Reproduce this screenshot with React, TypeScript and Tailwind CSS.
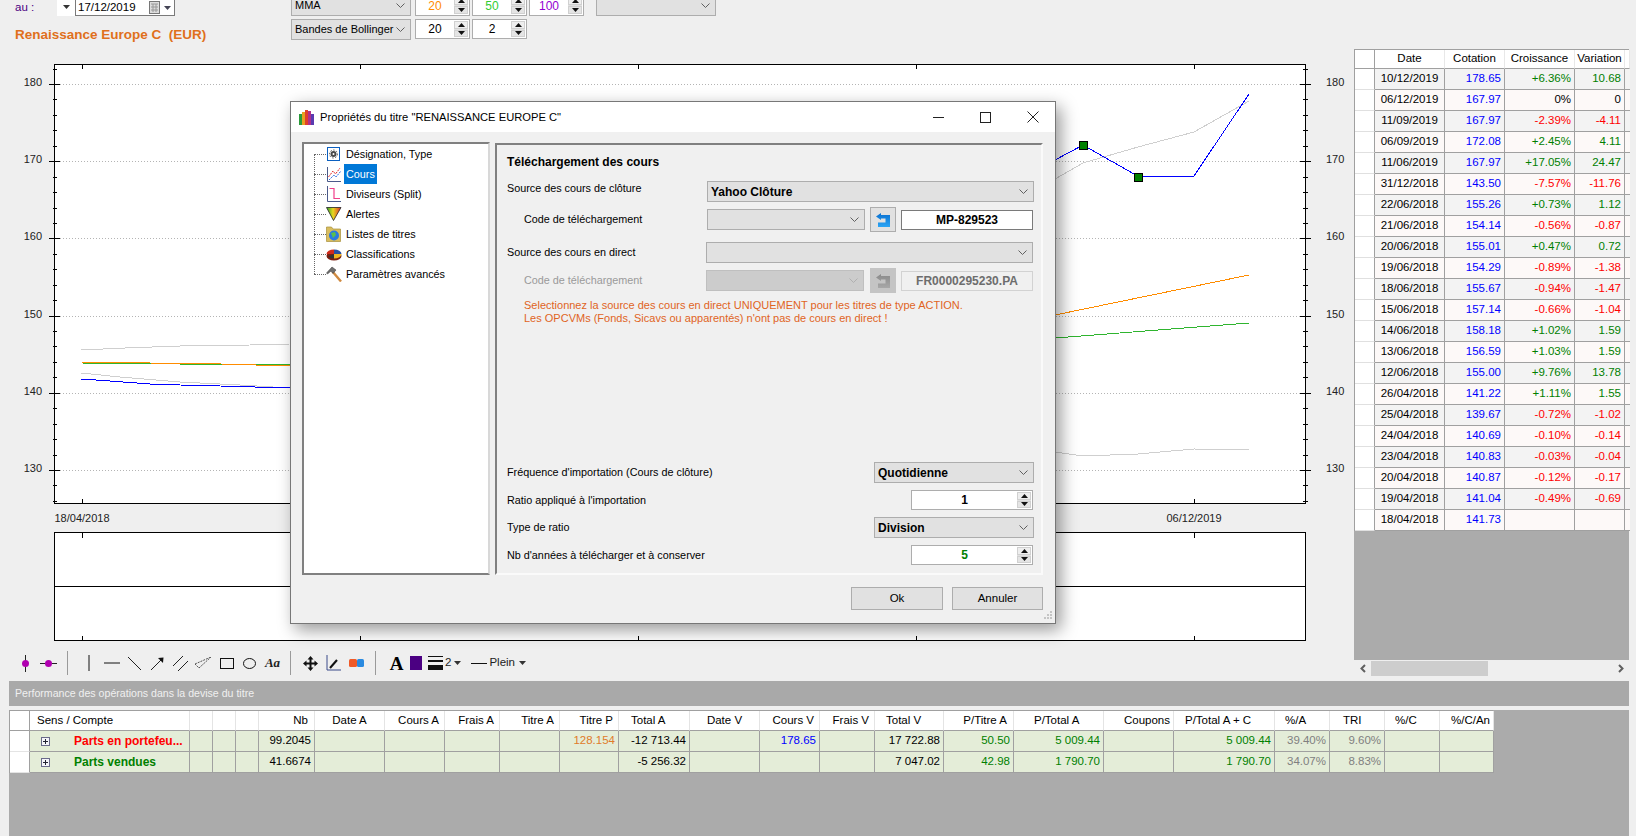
import React from "react";

const Chevron = ({ color = "#606060" }: { color?: string }) => (
  <svg width="9" height="5" viewBox="0 0 9 5" className="shrink-0">
    <path d="M0.5 0.5 L4.5 4.5 L8.5 0.5" fill="none" stroke={color} strokeWidth="1" />
  </svg>
);

const Combo = ({ text, className = "", bold = false, disabled = false }: { text?: string; className?: string; bold?: boolean; disabled?: boolean }) => (
  <div className={`flex items-center justify-between border pl-[3px] pr-[5px] ${disabled ? "bg-[#cccccc] border-[#bfbfbf]" : "bg-[#e1e1e1] border-[#adadad]"} ${bold ? "font-bold text-[12px]" : ""} ${className}`}>
    <span className="whitespace-nowrap">{text}</span>
    <Chevron color={disabled ? "#b0b0b0" : "#606060"} />
  </div>
);

const Stepper = () => (
  <div className="flex flex-col w-[14px] h-[16px] shrink-0 bg-[#e1e1e1] gap-px">
    <div className="flex-1 flex items-center justify-center border border-[#d0d0d0] bg-[#eeeeee]">
      <svg width="7" height="4" viewBox="0 0 7 4"><path d="M3.5 0 L7 4 L0 4 Z" fill="#111" /></svg>
    </div>
    <div className="flex-1 flex items-center justify-center border border-[#d0d0d0] bg-[#e4e4e4]">
      <svg width="7" height="4" viewBox="0 0 7 4"><path d="M0 0 L7 0 L3.5 4 Z" fill="#111" /></svg>
    </div>
  </div>
);

const Spin = ({ value, className = "", text = "" }: { value: string; className?: string; text?: string }) => (
  <div className={`flex items-center bg-white border border-[#adadad] pr-[1px] ${className}`}>
    <div className={`flex-1 text-center ${text}`}>{value}</div>
    <Stepper />
  </div>
);

const Fetch = ({ gray = false }: { gray?: boolean }) => {
  const id = gray ? "fetch-gray" : "fetch-blue";
  return (
    <div className={`w-[26px] h-[25px] flex items-center justify-center border ${gray ? "bg-[#c4c4c4] border-[#c4c4c4]" : "bg-[#e1e1e1] border-[#adadad]"}`}>
      <svg width="15" height="14" viewBox="0 0 15 14">
        <defs>
          <linearGradient id={id} x1="0" y1="0" x2="0" y2="1">
            <stop offset="0" stopColor={gray ? "#8a8a8a" : "#0a6fd0"} />
            <stop offset="1" stopColor={gray ? "#a8a8a8" : "#2aa5f5"} />
          </linearGradient>
        </defs>
        <path d="M0 3.5 L5 0 V2 H14 V14 H2 V9.5 H9.5 V5.5 H5 V7 Z" fill={`url(#${id})`} />
      </svg>
    </div>
  );
};

const Designation = () => (
  <svg width="16" height="16" viewBox="0 0 16 16">
    <rect x="1.5" y="1.5" width="12" height="13" fill="#fff" stroke="#0b5fc0" />
    <circle cx="7.5" cy="8" r="3" fill="#4a4a4a" />
    <circle cx="7.5" cy="8" r="4" fill="none" stroke="#555" strokeDasharray="1.5 1.5" />
    <circle cx="7.5" cy="8" r="1" fill="#fff" />
  </svg>
);
const CoursI = () => (
  <svg width="16" height="16" viewBox="0 0 16 16">
    <path d="M1.5 1 V15.5 H15" fill="none" stroke="#4a5a8a" />
    <path d="M2.5 11 L7 5 L9.5 8 L14 2" fill="none" stroke="#e02a2a" strokeDasharray="2 1" />
    <path d="M3 14 L8 9 L10 11 L15 5" fill="none" stroke="#2a6ae0" strokeDasharray="2 1" />
  </svg>
);
const Split = () => (
  <svg width="16" height="16" viewBox="0 0 16 16">
    <path d="M1.5 0 V15.5 H15" fill="none" stroke="#4a5a8a" />
    <path d="M3.5 2.5 H8 V12.5 H14" fill="none" stroke="#f0408a" strokeWidth="1.2" />
  </svg>
);
const Alert = () => (
  <svg width="16" height="16" viewBox="0 0 16 16">
    <defs>
      <linearGradient id="al" x1="0" y1="0" x2="1" y2="0">
        <stop offset="0" stopColor="#2aa02a" />
        <stop offset="0.45" stopColor="#e8d820" />
        <stop offset="1" stopColor="#e02a2a" />
      </linearGradient>
    </defs>
    <path d="M0.5 1.5 H15 L7.5 14.5 Z" fill="url(#al)" stroke="#222" strokeWidth="0.8" />
  </svg>
);
const Folder = () => (
  <svg width="16" height="16" viewBox="0 0 16 16">
    <path d="M0.5 1 H5.5 L7 3 H14.5 V15.5 H0.5 Z" fill="#d9bd5f" stroke="#a88f3a" strokeWidth="0.7" />
    <circle cx="8" cy="9.5" r="5" fill="#2a7ae0" />
    <path d="M5 7 L9 6 L10 9 L7 12 Z" fill="#5bc04a" />
  </svg>
);
const Pie = () => (
  <svg width="16" height="16" viewBox="0 0 16 16">
    <ellipse cx="8" cy="10" rx="7.5" ry="4.5" fill="#7a1f10" />
    <path d="M8 8 L0.5 8 A7.5 4.5 0 0 1 8 3.5 Z" fill="#d02a1a" />
    <path d="M8 8 L8 3.5 A7.5 4.5 0 0 1 15.5 8 Z" fill="#2a50a0" />
    <path d="M8 8 L15.5 8 A7.5 4.5 0 0 1 8 12.5 Z" fill="#eeb520" />
    <path d="M8 8 L8 12.5 A7.5 4.5 0 0 1 2 10.5 Z" fill="#333" />
  </svg>
);
const Hammer = () => (
  <svg width="16" height="16" viewBox="0 0 16 16">
    <path d="M6.5 5.5 L15 15.5" stroke="#d08a40" strokeWidth="2.4" />
    <path d="M0.5 7 L6 1 L10 4 L7 7.5 L5 5 L1.5 8 Z" fill="#6e6e6e" stroke="#333" strokeWidth="0.5" />
  </svg>
);

const treeItems: { label: string; icon: React.ReactNode; selected?: boolean }[] = [
  { label: "Désignation, Type", icon: <Designation /> },
  { label: "Cours", icon: <CoursI />, selected: true },
  { label: "Diviseurs (Split)", icon: <Split /> },
  { label: "Alertes", icon: <Alert /> },
  { label: "Listes de titres", icon: <Folder /> },
  { label: "Classifications", icon: <Pie /> },
  { label: "Paramètres avancés", icon: <Hammer /> },
];

const Tree = () => (
  <div className="relative w-[188px] bg-white border-t-2 border-l-2 border-[#808080] border-r-2 border-r-[#d8d8d8] border-b-2 border-b-[#808080]">
    <div className="absolute left-[10px] top-[10px] h-[120px] border-l border-dotted border-[#666]" />
    {treeItems.map((t) => (
      <div key={t.label} className="flex items-center h-[20px] pl-[10px]">
        <div className="w-[12px] border-t border-dotted border-[#666]" />
        <div className="w-[16px] h-[16px]">{t.icon}</div>
        <div className={`ml-[2px] h-[20px] leading-[20px] px-[2px] ${t.selected ? "bg-[#0078d7] text-white" : ""}`}>{t.label}</div>
      </div>
    ))}
  </div>
);

const Dialog = () => (
  <div className="absolute left-[290px] top-[101px] w-[766px] h-[523px] flex flex-col bg-[#f0f0f0] border border-[#777777] shadow-[5px_6px_16px_rgba(0,0,0,0.4)] text-[10.8px] text-black">
    <div className="h-[30px] bg-white flex items-center shrink-0 pl-[8px]">
      <svg width="16" height="16" viewBox="0 0 16 16" className="mr-[5px]">
        <rect x="0" y="5" width="3" height="11" fill="#2a9a3a" />
        <rect x="3" y="3" width="3" height="13" fill="#e8a020" />
        <rect x="6" y="1" width="3" height="15" fill="#e0402a" />
        <rect x="9" y="2" width="3" height="14" fill="#b0308a" />
        <rect x="12" y="5" width="3" height="11" fill="#5a3ab0" />
      </svg>
      <span className="text-[11.2px]">Propriétés du titre "RENAISSANCE EUROPE C"</span>
      <div className="ml-auto flex items-center h-full">
        <div className="w-[47px] flex justify-center"><svg width="11" height="1"><rect width="11" height="1" fill="#222" /></svg></div>
        <div className="w-[47px] flex justify-center"><svg width="11" height="11"><rect x="0.5" y="0.5" width="10" height="10" fill="none" stroke="#222" /></svg></div>
        <div className="w-[47px] flex justify-center mr-[-1px]"><svg width="12" height="12"><path d="M0.5 0.5 L11.5 11.5 M11.5 0.5 L0.5 11.5" stroke="#222" /></svg></div>
      </div>
    </div>
    <div className="flex-1 flex pl-[11px] pr-[12px] pt-[10px] gap-[5px] h-[433px] max-h-[443px]">
      <Tree />
      <div className="flex-1 mt-[1px] flex flex-col border-t-2 border-l-2 border-t-[#808080] border-l-[#808080] border-r-2 border-b-2 border-r-[#fafafa] border-b-[#fafafa] pl-[10px] pr-[7px] pb-[8px]">
        <div className="mt-[10px] h-[14px] leading-[14px] font-bold text-[12px]">Téléchargement des cours</div>
        <div className="mt-[12px] flex h-[21px]">
          <div className="w-[200px] leading-[14px]">Source des cours de clôture</div>
          <Combo text="Yahoo Clôture" bold className="flex-1" />
        </div>
        <div className="mt-[5px] flex items-center h-[25px]">
          <div className="w-[200px] pl-[17px]">Code de téléchargement</div>
          <Combo className="w-[158px] h-[21px]" />
          <div className="ml-[5px]"><Fetch /></div>
          <div className="ml-[5px] w-[132px] h-[20px] flex items-center justify-center bg-white border border-[#7a7a7a] font-bold text-[12px]">MP-829523</div>
        </div>
        <div className="mt-[10px] flex items-center h-[21px]">
          <div className="w-[199px]">Source des cours en direct</div>
          <Combo className="w-[327px] h-[21px]" />
        </div>
        <div className="mt-[5px] flex items-center h-[25px]">
          <div className="w-[199px] pl-[17px] text-[#9a9a9a]">Code de téléchargement</div>
          <Combo disabled className="w-[158px] h-[21px]" />
          <div className="ml-[6px]"><Fetch gray /></div>
          <div className="ml-[5px] w-[132px] h-[20px] flex items-center justify-center bg-[#f0f0f0] border border-[#d2d2d2] font-bold text-[12px] text-[#6d6d6d]">FR0000295230.PA</div>
        </div>
        <div className="mt-[6px] pl-[17px] leading-[13px] text-[#e0641e] text-[11px]">
          <div>Selectionnez la source des cours en direct UNIQUEMENT pour les titres de type ACTION.</div>
          <div>Les OPCVMs (Fonds, Sicavs ou apparentés) n'ont pas de cours en direct !</div>
        </div>
        <div className="mt-auto flex items-center justify-between h-[21px]">
          <div>Fréquence d'importation (Cours de clôture)</div>
          <Combo text="Quotidienne" bold className="w-[160px] h-[21px]" />
        </div>
        <div className="mt-[7px] flex items-center justify-between h-[20px]">
          <div>Ratio appliqué à l'importation</div>
          <Spin value="1" text="font-bold text-[12px]" className="w-[122px] h-[20px] mr-[1px]" />
        </div>
        <div className="mt-[7px] flex items-center justify-between h-[21px]">
          <div>Type de ratio</div>
          <Combo text="Division" bold className="w-[160px] h-[21px]" />
        </div>
        <div className="mt-[7px] flex items-center justify-between h-[20px]">
          <div>Nb d'années à télécharger et à conserver</div>
          <Spin value="5" text="font-bold text-[12px] text-[#008000]" className="w-[122px] h-[20px] mr-[1px]" />
        </div>
      </div>
    </div>
    <div className="relative h-[47px] shrink-0 flex justify-end gap-[9px] pt-[12px] pr-[12px]">
      <div className="w-[92px] h-[23px] flex items-center justify-center bg-[#e1e1e1] border border-[#adadad] text-[11.5px]">Ok</div>
      <div className="w-[91px] h-[23px] flex items-center justify-center bg-[#e1e1e1] border border-[#adadad] text-[11.5px]">Annuler</div>
      <svg width="10" height="10" viewBox="0 0 10 10" className="absolute right-[2px] bottom-[2px]">
        <g fill="#c4c4c4">
          <rect x="7" y="1" width="2" height="2" /><rect x="4" y="4" width="2" height="2" /><rect x="7" y="4" width="2" height="2" />
          <rect x="1" y="7" width="2" height="2" /><rect x="4" y="7" width="2" height="2" /><rect x="7" y="7" width="2" height="2" />
        </g>
      </svg>
    </div>
  </div>
);

const yOf = (v: number) => 84 + (180 - v) * 7.72;
const xTicks = [82, 360, 638, 916, 1194];
const yMajor = [130, 140, 150, 160, 170, 180];
const yMinor = Array.from({ length: 29 }, (_, i) => 126 + i * 2).filter((v) => v % 10 !== 0);

const Chart = () => (
  <svg width="1354" height="601" viewBox="0 49 1354 601" className="block">
    <g shapeRendering="crispEdges">
      <rect x="54.5" y="64.5" width="1251" height="439" fill="#fff" />
      {yMajor.map((v) => (
        <line key={v} x1="54" x2="1305" y1={Math.round(yOf(v)) + 0.5} y2={Math.round(yOf(v)) + 0.5} stroke="#b4b4b4" strokeDasharray="1 2" />
      ))}
      <polyline fill="none" stroke="#cfcfcf" points="81,350 125,348 180,346 250,345 290,344 1055,179 1083,163 1138,147 1194,132 1249,101" />
      <polyline fill="none" stroke="#cfcfcf" points="81,373 120,377 180,382 240,385 290,388 600,460 1055,452 1083,456 1138,454 1194,449 1249,450" />
      <polyline fill="none" stroke="#2fb52f" points="81,363 277,365 1055,338 1249,323" />
      <polyline fill="none" stroke="#ff8c00" points="81,362 150,363 221,364 290,366 1055,315 1249,275" />
      <polyline fill="none" stroke="#0000ff" points="81,379 110,381 150,384 180,385 220,386 290,388 1055,160 1083,145 1134,174 1140,176 1194,176 1249,94" />
      <rect x="1079.5" y="141.5" width="8" height="8" fill="#008000" stroke="#000" />
      <rect x="1134.5" y="173.5" width="8" height="8" fill="#008000" stroke="#000" />
      <rect x="54.5" y="64.5" width="1251" height="439" fill="none" stroke="#000" />
      {yMajor.map((v) => {
        const y = Math.round(yOf(v)) + 0.5;
        return (
          <g key={v} stroke="#000">
            <line x1="49" x2="60" y1={y} y2={y} />
            <line x1="1300" x2="1311" y1={y} y2={y} />
          </g>
        );
      })}
      {yMinor.map((v) => {
        const y = Math.round(yOf(v)) + 0.5;
        return (
          <g key={v} stroke="#000">
            <line x1="53" x2="57" y1={y} y2={y} />
            <line x1="1303" x2="1308" y1={y} y2={y} />
          </g>
        );
      })}
      <rect x="54.5" y="532.5" width="1251" height="108" fill="#fff" stroke="#000" />
      <line x1="54" x2="1305" y1="586.5" y2="586.5" stroke="#000" />
      {xTicks.map((x) => (
        <g key={x} stroke="#000">
          <line x1={x + 0.5} x2={x + 0.5} y1="64" y2="69" />
          <line x1={x + 0.5} x2={x + 0.5} y1="499" y2="503" />
          <line x1={x + 0.5} x2={x + 0.5} y1="532" y2="538" />
          <line x1={x + 0.5} x2={x + 0.5} y1="636" y2="641" />
        </g>
      ))}
    </g>
    <g fontSize="11" fill="#222">
      {yMajor.map((v) => (
        <g key={v}>
          <text x="42" y={yOf(v) + 2} textAnchor="end">{v}</text>
          <text x="1326" y={yOf(v) + 2}>{v}</text>
        </g>
      ))}
      <text x="82" y="522" textAnchor="middle">18/04/2018</text>
      <text x="1194" y="522" textAnchor="middle">06/12/2019</text>
    </g>
  </svg>
);

const Tool = ({ children }: { children: React.ReactNode }) => (
  <div className="w-[23px] h-[20px] flex items-center justify-center shrink-0">{children}</div>
);
const Sep = ({ className }: { className: string }) => <div className={`w-px h-[24px] bg-[#9a9a9a] shrink-0 ${className}`} />;
const Caret = () => (
  <svg width="7" height="4" viewBox="0 0 7 4" className="shrink-0"><path d="M0 0 H7 L3.5 4 Z" fill="#333" /></svg>
);

const Toolbar = () => (
  <div className="h-[26px] flex items-center pl-[14px] text-[11.5px] text-[#222]">
    <Tool><svg width="9" height="17" viewBox="0 0 9 17"><line x1="4.5" y1="0" x2="4.5" y2="17" stroke="#222" /><circle cx="4.5" cy="8.5" r="3.5" fill="#b000b0" /></svg></Tool>
    <Tool><svg width="17" height="9" viewBox="0 0 17 9"><line x1="0" y1="4.5" x2="17" y2="4.5" stroke="#222" /><circle cx="8.5" cy="4.5" r="3.5" fill="#b000b0" /></svg></Tool>
    <Sep className="ml-[7px] mr-[9px]" />
    <Tool><svg width="2" height="16"><line x1="1" y1="0" x2="1" y2="16" stroke="#111" /></svg></Tool>
    <Tool><svg width="16" height="2"><line x1="0" y1="1" x2="16" y2="1" stroke="#111" /></svg></Tool>
    <Tool><svg width="13" height="13"><line x1="0" y1="0" x2="13" y2="13" stroke="#222" /></svg></Tool>
    <Tool><svg width="13" height="13" viewBox="0 0 13 13"><line x1="0" y1="13" x2="11" y2="2" stroke="#222" /><path d="M7 1 L12.5 0.5 L12 6 Z" fill="#111" /></svg></Tool>
    <Tool><svg width="15" height="15"><path d="M0 10 L10 0 M5 15 L15 5" stroke="#222" /></svg></Tool>
    <Tool><svg width="17" height="12"><path d="M0 7 L16 0 M4 11 L16 0 M0 7 L4 11" stroke="#555" strokeDasharray="2 1" fill="none" /></svg></Tool>
    <Tool><svg width="14" height="11"><rect x="0.5" y="0.5" width="13" height="10" fill="none" stroke="#111" /></svg></Tool>
    <Tool><svg width="13" height="11"><ellipse cx="6.5" cy="5.5" rx="6" ry="5" fill="none" stroke="#111" /></svg></Tool>
    <Tool><span className="font-[family-name:'Liberation_Serif',serif] font-bold italic text-[13px]">Aa</span></Tool>
    <Sep className="ml-[6px] mr-[8px]" />
    <Tool><svg width="15" height="15" viewBox="0 0 15 15"><path d="M7.5 0 L10.5 3.5 H8.5 V6.5 H11.5 V4.5 L15 7.5 L11.5 10.5 V8.5 H8.5 V11.5 H10.5 L7.5 15 L4.5 11.5 H6.5 V8.5 H3.5 V10.5 L0 7.5 L3.5 4.5 V6.5 H6.5 V3.5 H4.5 Z" fill="#111" /></svg></Tool>
    <Tool><svg width="15" height="16" viewBox="0 0 15 16"><path d="M1 0 V15 H15" fill="none" stroke="#3a4a8a" /><path d="M4 13 L11 5" stroke="#111" strokeWidth="2" /></svg></Tool>
    <Tool><svg width="15" height="8"><rect width="8" height="8" rx="1.5" fill="#f05a28" /><rect x="8" width="7" height="8" rx="1.5" fill="#2a8ae0" /></svg></Tool>
    <Sep className="ml-[7px] mr-[9px]" />
    <Tool><span className="font-[family-name:'Liberation_Serif',serif] font-bold text-[19px] leading-none text-black">A</span></Tool>
    <div className="w-[12px] h-[14px] bg-[#4b0082] ml-[2px] mr-[6px] shrink-0" />
    <svg width="15" height="14" className="shrink-0"><rect y="0" width="15" height="1" fill="#111" /><rect y="4" width="15" height="2" fill="#111" /><rect y="9" width="15" height="5" fill="#111" /></svg>
    <span className="ml-[2px] mr-[3px]">2</span>
    <Caret />
    <div className="w-[16px] h-px bg-[#111] ml-[10px] mr-[2px]" />
    <span className="mr-[4px]">Plein</span>
    <Caret />
  </div>
);

const Header = () => (
  <div className="h-[49px] flex shrink-0 text-[11px] text-black">
    <div className="w-[291px] shrink-0 pl-[15px]">
      <div className="flex h-[16px] items-center text-[11.5px]">
        <span className="w-[42px] text-[#4b0082]">au :</span>
        <div className="w-[18px] h-[16px] bg-white flex justify-center pt-[5px]"><Caret /></div>
        <div className="w-[100px] h-[17px] -mt-px bg-white border border-[#7a7a7a] flex items-center pl-[2px]">
          <span>17/12/2019</span>
          <svg width="12" height="13" viewBox="0 0 12 13" className="ml-auto"><rect x="0.5" y="0.5" width="10" height="12" fill="#ddd" stroke="#777" /><path d="M2 3 H9 M2 6 H9 M2 9 H9 M4 3 V11 M7 3 V11" stroke="#999" /></svg>
          <svg width="7" height="4" viewBox="0 0 7 4" className="mx-[3px]"><path d="M0 0 H7 L3.5 4 Z" fill="#445" /></svg>
        </div>
      </div>
      <div className="mt-[11px] font-bold text-[13.5px] leading-[16px] text-[#e0701c] whitespace-pre">Renaissance Europe C  (EUR)</div>
    </div>
    <div className="flex flex-col">
      <div className="flex -mt-[5px] h-[21px]">
        <Combo text="MMA" className="w-[120px]" />
        <Spin value="20" text="text-[12px] text-[#ff8c00]" className="w-[55px] ml-[4px]" />
        <Spin value="50" text="text-[12px] text-[#32cd32]" className="w-[55px] ml-[2px]" />
        <Spin value="100" text="text-[12px] text-[#9400d3]" className="w-[55px] ml-[2px]" />
        <Combo className="w-[120px] ml-[12px]" />
      </div>
      <div className="flex mt-[3px] h-[21px]">
        <Combo text="Bandes de Bollinger" className="w-[120px]" />
        <Spin value="20" text="text-[12px]" className="w-[55px] h-[20px] ml-[4px]" />
        <Spin value="2" text="text-[12px]" className="w-[55px] h-[20px] ml-[2px]" />
      </div>
    </div>
  </div>
);

const quotes: [string, string, string, string][] = [
  ["10/12/2019", "178.65", "+6.36%", "10.68"],
  ["06/12/2019", "167.97", "0%", "0"],
  ["11/09/2019", "167.97", "-2.39%", "-4.11"],
  ["06/09/2019", "172.08", "+2.45%", "4.11"],
  ["11/06/2019", "167.97", "+17.05%", "24.47"],
  ["31/12/2018", "143.50", "-7.57%", "-11.76"],
  ["22/06/2018", "155.26", "+0.73%", "1.12"],
  ["21/06/2018", "154.14", "-0.56%", "-0.87"],
  ["20/06/2018", "155.01", "+0.47%", "0.72"],
  ["19/06/2018", "154.29", "-0.89%", "-1.38"],
  ["18/06/2018", "155.67", "-0.94%", "-1.47"],
  ["15/06/2018", "157.14", "-0.66%", "-1.04"],
  ["14/06/2018", "158.18", "+1.02%", "1.59"],
  ["13/06/2018", "156.59", "+1.03%", "1.59"],
  ["12/06/2018", "155.00", "+9.76%", "13.78"],
  ["26/04/2018", "141.22", "+1.11%", "1.55"],
  ["25/04/2018", "139.67", "-0.72%", "-1.02"],
  ["24/04/2018", "140.69", "-0.10%", "-0.14"],
  ["23/04/2018", "140.83", "-0.03%", "-0.04"],
  ["20/04/2018", "140.87", "-0.12%", "-0.17"],
  ["19/04/2018", "141.04", "-0.49%", "-0.69"],
  ["18/04/2018", "141.73", "", ""],
];

const signColor = (s: string) => (s.startsWith("-") ? "text-[#ff0000]" : s === "0" || s === "0%" ? "text-black" : "text-[#008000]");

const QuoteTable = () => (
  <div className="grid grid-cols-[20px_70px_60px_70px_50px_5px] grid-rows-[19px] auto-rows-[21px] border-t border-l border-[#a0a0a0] text-[11.5px] text-black shrink-0">
    {["", "Date", "Cotation", "Croissance", "Variation", ""].map((h, i) => (
      <div key={i} className={`bg-white flex items-center justify-center border-b border-[#a0a0a0] ${i === 0 ? "border-r" : "border-r border-r-[#e8e8e8]"}`}>
        {h}
      </div>
    ))}
    {quotes.map((q, i) => {
      const bg = i % 2 === 0 ? "bg-[#f3f3f3]" : "bg-[#fdf9f8]";
      const cell = `${bg} flex items-center border-r border-b border-[#a0a0a0]`;
      return (
        <React.Fragment key={q[0]}>
          <div className="bg-white border-r border-r-[#a0a0a0] border-b border-b-[#e0e0e0]" />
          <div className={`${cell} justify-center`}>{q[0]}</div>
          <div className={`${cell} justify-end pr-[3px] text-[#0000ff]`}>{q[1]}</div>
          <div className={`${cell} justify-end pr-[3px] ${signColor(q[2])}`}>{q[2]}</div>
          <div className={`${cell} justify-end pr-[3px] ${signColor(q[3])}`}>{q[3]}</div>
          <div className={`${bg} border-b border-[#a0a0a0]`} />
        </React.Fragment>
      );
    })}
  </div>
);

const Scroller = () => (
  <div className="h-[15px] mt-px flex items-center">
    <div className="w-[17px] flex justify-center">
      <svg width="6" height="9" viewBox="0 0 6 9"><path d="M5 1 L1.5 4.5 L5 8" fill="none" stroke="#606060" strokeWidth="2" /></svg>
    </div>
    <div className="w-[117px] h-full bg-[#cdcdcd]" />
    <div className="flex-1" />
    <div className="w-[16px] flex justify-center">
      <svg width="6" height="9" viewBox="0 0 6 9"><path d="M1 1 L4.5 4.5 L1 8" fill="none" stroke="#606060" strokeWidth="2" /></svg>
    </div>
  </div>
);

const heads: [string, string][] = [
  ["", ""],
  ["Sens / Compte", "pl-[7px]"],
  ["", ""],
  ["", ""],
  ["", ""],
  ["Nb", "justify-end pr-[6px]"],
  ["Date A", "justify-center"],
  ["Cours A", "justify-end pr-[5px]"],
  ["Frais A", "justify-end pr-[5px]"],
  ["Titre A", "justify-end pr-[5px]"],
  ["Titre P", "justify-end pr-[5px]"],
  ["Total A", "pl-[12px]"],
  ["Date V", "justify-center"],
  ["Cours V", "justify-end pr-[5px]"],
  ["Frais V", "justify-end pr-[5px]"],
  ["Total V", "pl-[11px]"],
  ["P/Titre A", "justify-end pr-[6px]"],
  ["P/Total A", "pl-[20px]"],
  ["Coupons", "justify-end pr-[3px]"],
  ["P/Total A + C", "pl-[11px]"],
  ["%/A", "pl-[10px]"],
  ["TRI", "pl-[13px]"],
  ["%/C", "pl-[10px]"],
  ["%/C/An", "pl-[11px]"],
];

const G = "text-[#008000]";
const M = "text-[#808080]";
const rows: { name: string; color: string; cells: ([string, string] | null)[] }[] = [
  {
    name: "Parts en portefeu...",
    color: "text-[#ff0000]",
    cells: [
      null, null, null, ["99.2045", ""], null, null, null, null, ["128.154", "text-[#e07b2a]"], ["-12 713.44", ""], null,
      ["178.65", "text-[#0000ff]"], null, ["17 722.88", ""], ["50.50", G], ["5 009.44", G], null, ["5 009.44", G], ["39.40%", M], ["9.60%", M], null, null,
    ],
  },
  {
    name: "Parts vendues",
    color: "text-[#008000]",
    cells: [
      null, null, null, ["41.6674", ""], null, null, null, null, null, ["-5 256.32", ""], null,
      null, null, ["7 047.02", ""], ["42.98", G], ["1 790.70", G], null, ["1 790.70", G], ["34.07%", M], ["8.83%", M], null, null,
    ],
  },
];

const PlusBox = () => (
  <svg width="9" height="9" viewBox="0 0 9 9" className="shrink-0">
    <rect x="0.5" y="0.5" width="8" height="8" fill="#f4f4fa" stroke="#6a6a8a" />
    <path d="M2 4.5 H7 M4.5 2 V7" stroke="#223" />
  </svg>
);

const OpsTable = () => (
  <div className="grid w-[1484px] grid-cols-[20px_160px_23px_23px_23px_56px_70px_60px_55px_60px_59px_71px_70px_60px_55px_69px_70px_90px_70px_101px_55px_55px_55px_54px] grid-rows-[20px_21px_21px] text-[11.5px] text-black border-t border-l border-[#a0a0a0]">
    {heads.map(([h, c], i) => (
      <div key={i} className={`bg-white flex items-center border-b border-[#a0a0a0] ${i === 0 ? "border-r border-r-[#a0a0a0]" : "border-r border-r-[#e4e4e4]"} ${c}`}>{h}</div>
    ))}
    {rows.map((r) => (
      <React.Fragment key={r.name}>
        <div className="bg-white border-r border-r-[#a0a0a0] border-b border-b-[#e4e4e4]" />
        <div className="bg-[#e4edd8] border-r border-b border-[#a0a0a0] flex items-center pl-[11px]">
          <PlusBox />
          <span className={`ml-[24px] font-bold text-[12px] whitespace-nowrap ${r.color}`}>{r.name}</span>
        </div>
        {r.cells.map((c, j) => (
          <div key={j} className={`bg-[#e4edd8] border-r border-b border-[#a0a0a0] flex items-center justify-end pr-[3px] whitespace-nowrap ${c ? c[1] : ""}`}>{c ? c[0] : ""}</div>
        ))}
      </React.Fragment>
    ))}
  </div>
);

export default function App() {
  return (
    <div className="relative w-[1636px] h-[836px] overflow-hidden flex flex-col bg-[#efefef] font-[family-name:'Liberation_Sans',Arial,sans-serif]">
      <div className="flex h-[681px] shrink-0">
        <div className="w-[1354px] shrink-0 flex flex-col">
          <Header />
          <Chart />
          <Toolbar />
        </div>
        <div className="w-[275px] shrink-0 flex flex-col pt-[49px]">
          <QuoteTable />
          <div className="bg-[#ababab] h-[129px] shrink-0" />
          <Scroller />
        </div>
      </div>
      <div className="ml-[9px] w-[1620px] h-[25px] shrink-0 bg-[#a9a9a9] flex items-center pl-[6px] text-[10.6px] text-[#f0f0f0]">
        Performance des opérations dans la devise du titre
      </div>
      <div className="h-[4px] shrink-0" />
      <div className="ml-[9px] w-[1620px] flex-1 bg-[#ababab]">
        <OpsTable />
      </div>
      <Dialog />
    </div>
  );
}
